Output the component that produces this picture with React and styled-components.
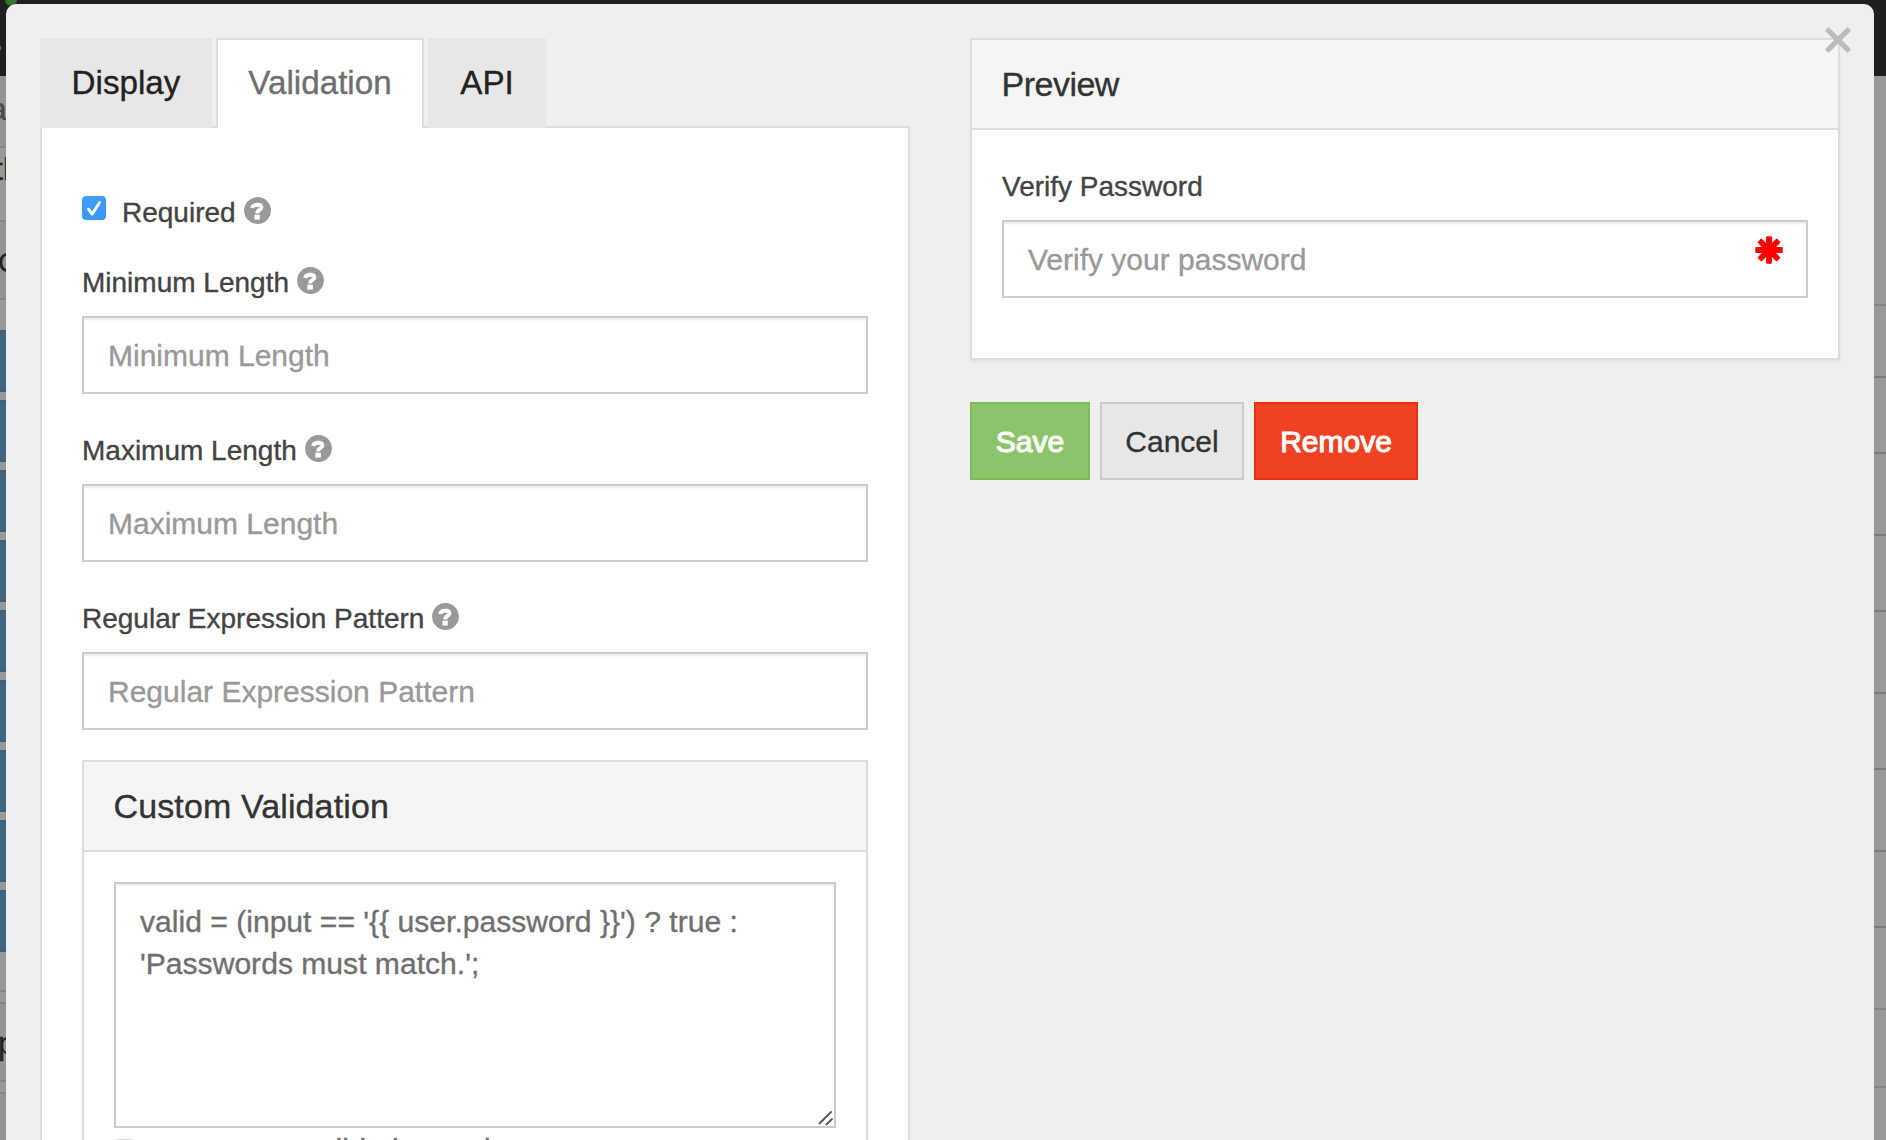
import React from "react";
import styled, { createGlobalStyle, css } from "styled-components";

const GlobalStyle = createGlobalStyle`
  *, *::before, *::after { box-sizing: border-box; }
  html, body { margin: 0; height: 100%; overflow: hidden; background: #999; }
  body, input, textarea, button {
    font-family: "Liberation Sans", Arial, Helvetica, sans-serif;
    font-weight: 400;
    -webkit-text-stroke: 0.35px currentColor;
  }
`;

/* ---------- page behind the dialog ---------- */

const Page = styled.div`
  position: relative;
  width: 1886px;
  height: 1140px;
  overflow: hidden;
  background: #999;
`;

const Navbar = styled.div`
  height: 76px;
  background: #1f1f1f;
  overflow: hidden;
`;

const StatusDot = styled.span`
  position: absolute;
  left: 5px;
  top: -6px;
  width: 12px;
  height: 12px;
  border-radius: 50%;
  background: #2f7229;
`;

const NavMark = styled.span`
  position: absolute;
  left: -5px;
  top: 45px;
  width: 6px;
  height: 6px;
  border-radius: 50%;
  background: #777;
`;

const Columns = styled.div`
  display: flex;
  justify-content: space-between;
`;

const Sidebar = styled.div`
  width: 6px;
  height: 1064px;
  overflow: hidden;
`;

const SideRow = styled.div`
  height: ${(p) => p.$h}px;
  padding-top: ${(p) => p.$pad || 0}px;
  overflow: hidden;
  background: ${(p) => p.$bg || "#999"};
  border-bottom: ${(p) => (p.$line ? "2px solid #858585" : "0")};
  color: ${(p) => p.$color || "#222"};
  font-size: ${(p) => p.$size || 32}px;
  line-height: 32px;
  text-indent: ${(p) => p.$shift || 0}px;
  white-space: nowrap;
`;

const SideButtons = styled.div`
  display: flex;
  flex-direction: column;
  gap: 8px;
  height: 622px;
`;

const SideButton = styled.div`
  height: 62px;
  background: #40657f;
  border-top: 2px solid #3b607a;
  border-bottom: 2px solid #3b607a;
`;

const Canvas = styled.div`
  width: 12px;
`;

const CanvasRow = styled.div`
  height: ${(p) => p.$h}px;
  border-bottom: 2px solid ${(p) => (p.$soft ? "#858585" : "#7b7b7b")};
`;

/* ---------- dialog ---------- */

const Dialog = styled.div`
  position: absolute;
  left: 6px;
  top: 4px;
  width: 1868px;
  height: 1136px;
  padding: 34px 34px 0;
  display: flex;
  align-items: flex-start;
  gap: 60px;
  overflow: hidden;
  background: #efefef;
  border-radius: 10px 10px 0 0;
`;

const CloseButton = styled.button`
  position: absolute;
  right: 22px;
  top: 22px;
  width: 28px;
  height: 28px;
  padding: 0;
  border: 0;
  background: none;
  svg { display: block; }
`;

const Column = styled.div`
  width: 870px;
`;

const Tabs = styled.div`
  display: flex;
  gap: 4px;
  height: 90px;
  border-bottom: 2px solid #ddd;
`;

const Tab = styled.div`
  width: ${(p) => p.$w}px;
  height: 90px;
  display: flex;
  justify-content: center;
  padding-top: 27px;
  font-size: 33.2px;
  line-height: 36px;
  color: #222;
  background: #e7e7e7;
  ${(p) =>
    p.$active &&
    css`
      padding-top: 25px;
      color: #6f6f6f;
      background: #fff;
      border: 2px solid #ddd;
      border-bottom: 0;
    `}
`;

const TabPane = styled.div`
  height: 1014px;
  padding: 64px 40px 0;
  background: #fff;
  border: 2px solid #ddd;
  border-top: 0;
  border-bottom: 0;
`;

const CheckRow = styled.label`
  display: flex;
  height: 40px;
  margin-bottom: 30px;
`;

const CheckBox = styled.span`
  width: 24px;
  height: 24px;
  margin: 4px 16px 0 0;
  border-radius: 4px;
  background: linear-gradient(#419dfc, #3797fb);
  svg { display: block; }
`;

const Field = styled.div`
  margin-bottom: ${(p) => (p.$gap === undefined ? 36 : p.$gap)}px;
`;

const LabelRow = styled.div`
  display: flex;
  height: 40px;
  margin-bottom: 14px;
`;

const LabelText = styled.span`
  font-size: 28px;
  line-height: 42px;
  color: #434343;
  white-space: nowrap;
`;

const HelpSvg = styled.svg`
  display: block;
  width: 27px;
  height: 27px;
  margin: 4.5px 0 0 8px;
`;

const InputWrap = styled.div`
  position: relative;
`;

const controlBox = css`
  display: block;
  width: 100%;
  margin: 0;
  border: 2px solid #ccc;
  border-radius: 0;
  outline: none;
  background: #fff;
  box-shadow: inset 0 2px 2px rgba(0, 0, 0, 0.075);
  font-size: 30.1px;
  color: #6f6f6f;
`;

const Input = styled.input`
  ${controlBox}
  height: 78px;
  padding: 2px 24px 0;
  font-size: 30px;
  &::placeholder { color: #999; opacity: 1; }
`;

const TextArea = styled.textarea`
  ${controlBox}
  height: 246px;
  padding: 17px 24px 0;
  line-height: 42px;
  resize: none;
  overflow: hidden;
`;

const Grip = styled.svg`
  position: absolute;
  right: 2px;
  bottom: 2px;
`;

const RequiredMark = styled.svg`
  position: absolute;
  right: 25px;
  top: 15.5px;
`;

const Panel = styled.section`
  background: #fff;
  border: 2px solid #ddd;
  box-shadow: 0 2px 2px rgba(0, 0, 0, 0.05);
`;

const PanelHeading = styled.h4`
  margin: 0;
  height: 90px;
  padding: 24px 29.5px;
  font-size: 34px;
  font-weight: 400;
  line-height: 40px;
  letter-spacing: ${(p) => p.$track}px;
  color: #333;
  background: #f5f5f5;
  border-bottom: 2px solid #ddd;
`;

const PanelBody = styled.div`
  padding: ${(p) => p.$pad};
`;

const HelpBlock = styled.p`
  margin: 1px 0 0;
  font-size: 30.3px;
  line-height: 42px;
  letter-spacing: 0.17px;
  color: #6f6f6f;
`;

const Actions = styled.div`
  display: flex;
  gap: 10px;
  margin-top: 42px;
`;

const tones = {
  save: css`color: #fff; background: #8bc46a; border-color: #7abd56; -webkit-text-stroke: 1.1px #fff;`,
  cancel: css`color: #333; background: #e7e7e7; border-color: #cbcbcb;`,
  remove: css`color: #fff; background: #f04124; border-color: #ea2f10; -webkit-text-stroke: 1.1px #fff;`,
};

const Button = styled.button`
  width: ${(p) => p.$w}px;
  height: 78px;
  padding: 2px 0 0;
  border: 2px solid;
  font-size: 30px;
  line-height: 42px;
  ${(p) => tones[p.$tone]}
`;

function HelpIcon() {
  return (
    <HelpSvg viewBox="0 0 27 27">
      <circle cx="13.5" cy="13.5" r="13.4" fill="#999" />
      <path
        d="M8.2 10.9C8.5 8.4 10.9 7.8 13.5 7.8C16.5 7.8 17.6 8.9 17.4 10.7C17.2 13.2 13.2 12.6 13.1 16.4"
        fill="none"
        stroke="#fff"
        strokeWidth="3.9"
      />
      <rect x="10.4" y="17.7" width="5.4" height="4.9" fill="#fff" />
    </HelpSvg>
  );
}

function TextField({ label, placeholder, help, required, gap }) {
  return (
    <Field $gap={gap}>
      <LabelRow>
        <LabelText>{label}</LabelText>
        {help && <HelpIcon />}
      </LabelRow>
      <InputWrap>
        <Input placeholder={placeholder} />
        {required && (
          <RequiredMark width="28" height="28" viewBox="-14 -14 28 28">
            {[0, 45, 90, 135].map((a) => (
              <rect
                key={a}
                x="-2.9"
                y="-13.7"
                width="5.8"
                height="27.4"
                rx="1"
                fill="#f00"
                transform={`rotate(${a})`}
              />
            ))}
          </RequiredMark>
        )}
      </InputWrap>
    </Field>
  );
}

const sideButtons = [1, 2, 3, 4, 5, 6, 7, 8, 9];
const canvasRows = [230, 72, 76, 82, 76, 82, 76, 82, 76, 82, 78];

export default function App() {
  return (
    <Page>
      <GlobalStyle />
      <Navbar>
        <StatusDot />
        <NavMark />
      </Navbar>
      <Columns>
        <Sidebar>
          <SideRow $h={72} $pad={17} $bg="#949494" $line $color="#4a4a4a" $shift={-11}>a</SideRow>
          <SideRow $h={74} $pad={5} $line $shift={-6}>th</SideRow>
          <SideRow $h={78} $pad={25} $bg="#949494" $line $size={28} $shift={-2}>C</SideRow>
          <SideRow $h={30} />
          <SideButtons>
            {sideButtons.map((n) => (
              <SideButton key={n} />
            ))}
          </SideButtons>
          <SideRow $h={40} $line />
          <SideRow $h={12} $line />
          <SideRow $h={78} $pad={23} $bg="#949494" $line $shift={-2}>p</SideRow>
          <SideRow $h={12} $line />
          <SideRow $h={48} $bg="#949494" />
        </Sidebar>
        <Canvas>
          {canvasRows.map((h, i) => (
            <CanvasRow key={i} $h={h} $soft={i === 0 || i > 8} />
          ))}
        </Canvas>
      </Columns>

      <Dialog role="dialog">
        <Column>
          <Tabs>
            <Tab $w={172}>Display</Tab>
            <Tab $w={208} $active>Validation</Tab>
            <Tab $w={118}>API</Tab>
          </Tabs>
          <TabPane>
            <CheckRow>
              <CheckBox>
                <svg width="24" height="24" viewBox="0 0 24 24">
                  <path d="M6.3 13.2L10.2 18L17.6 6.4" fill="none" stroke="#fff" strokeWidth="2.8" strokeLinecap="round" strokeLinejoin="round" />
                </svg>
              </CheckBox>
              <LabelText>Required</LabelText>
              <HelpIcon />
            </CheckRow>
            <TextField label="Minimum Length" placeholder="Minimum Length" help />
            <TextField label="Maximum Length" placeholder="Maximum Length" help />
            <TextField label="Regular Expression Pattern" placeholder="Regular Expression Pattern" help gap={30} />
            <Panel>
              <PanelHeading $track={0.12}>Custom Validation</PanelHeading>
              <PanelBody $pad="30px 30px 0">
                <InputWrap>
                  <TextArea
                    spellCheck={false}
                    defaultValue={"valid = (input == '{{ user.password }}') ? true : 'Passwords must match.';"}
                  />
                  <Grip width="16" height="16" viewBox="0 0 16 16">
                    <path d="M1.5 13.5L13 2M8.5 14.5L14 9" stroke="#555" strokeWidth="1.8" strokeLinecap="round" />
                  </Grip>
                </InputWrap>
                <HelpBlock>Enter custom validation code.</HelpBlock>
              </PanelBody>
            </Panel>
          </TabPane>
        </Column>

        <Column>
          <Panel>
            <PanelHeading $track={-0.5}>Preview</PanelHeading>
            <PanelBody $pad="36px 30px 60px">
              <TextField label="Verify Password" placeholder="Verify your password" required gap={0} />
            </PanelBody>
          </Panel>
          <Actions>
            <Button $w={120} $tone="save">Save</Button>
            <Button $w={144} $tone="cancel">Cancel</Button>
            <Button $w={164} $tone="remove">Remove</Button>
          </Actions>
        </Column>

        <CloseButton aria-label="Close">
          <svg width="28" height="28" viewBox="0 0 28 28">
            <path d="M2.8 2.8L25.2 25.2M25.2 2.8L2.8 25.2" stroke="#bbb" strokeWidth="5.2" />
          </svg>
        </CloseButton>
      </Dialog>
    </Page>
  );
}
